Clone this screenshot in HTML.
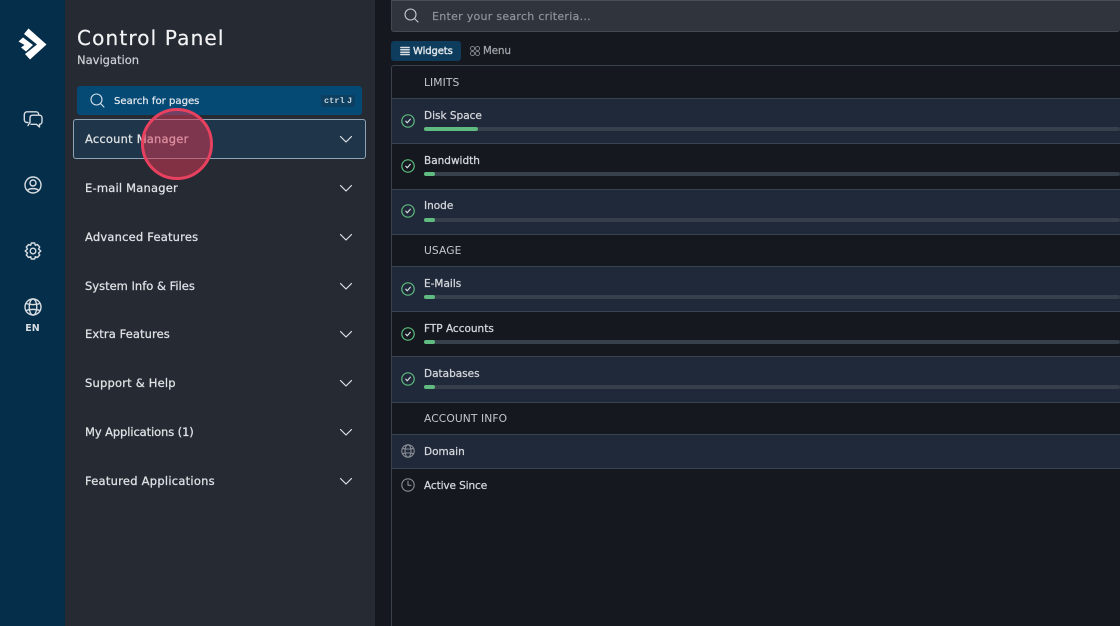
<!DOCTYPE html>
<html><head><meta charset="utf-8"><style>
html,body{margin:0;padding:0;background:#15191f}
#p{position:relative;width:1120px;height:626px;overflow:hidden;background:#15191f;font-family:"DejaVu Sans","Liberation Sans",sans-serif;color:#d5d8dc}
#p div,#p svg{position:absolute}
.t{white-space:nowrap;line-height:14px}
.nav{left:85px;font-size:11.5px;font-weight:400;color:#dfe2e5;letter-spacing:.2px;-webkit-text-stroke:.25px #dfe2e5}
.w{left:424px;font-size:10.5px;color:#d5d8dc;-webkit-text-stroke:.25px #d5d8dc}
.sec{left:424px;font-size:10.7px;color:#c3c7cc;letter-spacing:.1px}
.row{left:392px;width:728px;border-bottom:1px solid #384250}
.hl{background:#20293a}
.bar{left:424px;width:696px;height:4px;background:#363f4b;border-radius:2px}
.fill{left:0;top:0;height:4px;border-radius:2px;background:#5fbb7f}
svg{fill:none;stroke:currentColor;stroke-linecap:round;stroke-linejoin:round}
</style></head><body><div id="p">
<div style="left:0;top:0;width:65px;height:626px;background:#052e4a"></div>
<div style="left:65px;top:0;width:310px;height:626px;background:#262a33"></div>

<svg style="left:12px;top:22px" width="40" height="44" viewBox="12 22 40 44"><path stroke="none" fill="#fff" d="M28.500 28.500L46.500 44.500L30 59.500L25 54L37 44.500L24 34Z"/><path stroke="none" fill="#fff" d="M23 37.500L33 45L26 51.500L21 47.500L24.500 45L18.500 41.500Z"/></svg>

<svg style="left:23px;top:110px;color:#d8dde2" width="20" height="19" viewBox="0 0 20 19" stroke-width="1.400"><path d="M5 12.500H4C2.500 12.500 1.300 11.300 1.300 9.800V4.500C1.300 3 2.500 1.800 4 1.800H13C14.500 1.800 15.700 3 15.700 4.500V5"/><path d="M5 15.500L7 12.500V8C7 6.300 8 5.200 9.700 5.200H16.500C18 5.200 19 6.300 19 8V11.500C19 13.200 18 14.300 16.500 14.300V17L13.500 14.300H8" fill="#052e4a"/></svg>
<svg style="left:24px;top:176px;color:#d8dde2" width="18" height="18" viewBox="0 0 18 18" stroke-width="1.400"><circle cx="9" cy="9" r="8"/><circle cx="9" cy="7" r="3"/><path d="M3.500 14.500C5 12 13 12 14.500 14.500"/></svg>
<svg style="left:24px;top:242px;color:#d8dde2" width="18" height="18" viewBox="0 0 18 18" stroke-width="1.400"><path d="M7.300 1H10.700L11.300 3.300L13.400 2.500L15.700 5L14.500 7L16.800 9L14.500 11L15.700 13L13.400 15.500L11.300 14.700L10.700 17H7.300L6.700 14.700L4.600 15.500L2.300 13L3.500 11L1.200 9L3.500 7L2.300 5L4.600 2.500L6.700 3.300Z"/><circle cx="9" cy="9" r="2.800"/></svg>
<svg style="left:24px;top:298px;color:#d8dde2" width="18" height="18" viewBox="0 0 18 18" stroke-width="1.400"><circle cx="9" cy="9" r="8"/><ellipse cx="9" cy="9" rx="3.800" ry="8"/><path d="M2 5.500C6 7 12 7 16 5.500M2 12.500C6 11 12 11 16 12.500"/></svg>
<div class="t" style="left:0;width:65px;text-align:center;top:322px;font-size:9.500px;font-weight:700;color:#d8dde2">EN</div>

<div class="t" style="left:77px;top:26px;font-size:20px;line-height:24px;color:#f2f3f4;letter-spacing:1.150px;-webkit-text-stroke:.2px #f2f3f4">Control Panel</div>
<div class="t" style="left:77px;top:53px;font-size:11.500px;color:#cdd0d4;-webkit-text-stroke:.2px #cdd0d4">Navigation</div>

<div style="left:77px;top:86px;width:285px;height:29px;background:#054a75;border-radius:3px"></div>
<svg style="left:90px;top:93px;color:#d8e2ea" width="15" height="15" viewBox="0 0 15 15" stroke-width="1.100"><circle cx="6.500" cy="6.500" r="5.500"/><path d="M10.500 10.500L14 14"/></svg>
<div class="t" style="left:114px;top:94px;font-size:10.100px;line-height:15px;color:#dfe6ec;-webkit-text-stroke:.25px #dfe6ec">Search for pages</div>
<div style="left:321px;top:95px;width:34px;height:12px;background:#0d3f60;border-radius:2px"></div>
<div class="t" style="left:324px;top:94px;font-family:'Liberation Mono',monospace;font-size:8.600px;font-weight:700;color:#c9d3da">ctrl</div>
<div class="t" style="left:347px;top:94px;font-family:'Liberation Mono',monospace;font-size:8.600px;font-weight:700;color:#c9d3da">J</div>

<div style="left:73px;top:119px;width:291px;height:38px;background:#1f3549;border:1px solid #8ea3b5;border-radius:3px"></div>
<div class="t nav" style="top:132px">Account Manager</div>
<div class="t nav" style="top:181px">E-mail Manager</div>
<div class="t nav" style="top:230px">Advanced Features</div>
<div class="t nav" style="top:279px;letter-spacing:0">System Info &amp; Files</div>
<div class="t nav" style="top:327px;letter-spacing:.1px">Extra Features</div>
<div class="t nav" style="top:376px">Support &amp; Help</div>
<div class="t nav" style="top:425px;letter-spacing:-.1px">My Applications (1)</div>
<div class="t nav" style="top:474px;letter-spacing:.25px">Featured Applications</div>

<svg style="left:339px;top:135px;color:#dfe2e5" width="14" height="9" viewBox="0 0 14 9" stroke-width="1.200"><path d="M1.500 1.500L7 7L12.500 1.500"/></svg>
<svg style="left:339px;top:184px;color:#dfe2e5" width="14" height="9" viewBox="0 0 14 9" stroke-width="1.200"><path d="M1.500 1.500L7 7L12.500 1.500"/></svg>
<svg style="left:339px;top:233px;color:#dfe2e5" width="14" height="9" viewBox="0 0 14 9" stroke-width="1.200"><path d="M1.500 1.500L7 7L12.500 1.500"/></svg>
<svg style="left:339px;top:282px;color:#dfe2e5" width="14" height="9" viewBox="0 0 14 9" stroke-width="1.200"><path d="M1.500 1.500L7 7L12.500 1.500"/></svg>
<svg style="left:339px;top:330px;color:#dfe2e5" width="14" height="9" viewBox="0 0 14 9" stroke-width="1.200"><path d="M1.500 1.500L7 7L12.500 1.500"/></svg>
<svg style="left:339px;top:379px;color:#dfe2e5" width="14" height="9" viewBox="0 0 14 9" stroke-width="1.200"><path d="M1.500 1.500L7 7L12.500 1.500"/></svg>
<svg style="left:339px;top:428px;color:#dfe2e5" width="14" height="9" viewBox="0 0 14 9" stroke-width="1.200"><path d="M1.500 1.500L7 7L12.500 1.500"/></svg>
<svg style="left:339px;top:477px;color:#dfe2e5" width="14" height="9" viewBox="0 0 14 9" stroke-width="1.200"><path d="M1.500 1.500L7 7L12.500 1.500"/></svg>

<div style="left:141px;top:108px;width:66px;height:66px;border:3px solid #e8405f;border-radius:50%;background:rgba(222,55,85,.5)"></div>

<div style="left:391px;top:0;width:729px;height:32px;background:#30343c;border:1px solid #444850;border-top-color:#494d55;border-right:0;box-sizing:border-box;border-radius:0 0 3px 3px"></div>
<svg style="left:404px;top:8px;color:#c7cacd" width="15" height="15" viewBox="0 0 15 15" stroke-width="1.100"><circle cx="6.500" cy="6.500" r="5.500"/><path d="M10.500 10.500L14 14"/></svg>
<div class="t" style="left:432px;top:10px;font-size:11px;color:#92969c;letter-spacing:.28px;-webkit-text-stroke:.15px #92969c">Enter your search criteria...</div>

<div style="left:391px;top:41px;width:70px;height:20px;background:#0d3c5c;border-radius:3px"></div>
<svg style="left:400px;top:46px;color:#d8dde2" width="10" height="10" viewBox="0 0 10 10" stroke-width="1.500"><path d="M.8 1.500H9.200M.8 3.800H9.200M.8 6.200H9.200M.8 8.500H9.200"/></svg>
<div class="t" style="left:413px;top:45px;font-size:10px;color:#dfe4e8;-webkit-text-stroke:.4px #dfe4e8;letter-spacing:-.1px">Widgets</div>
<svg style="left:470px;top:46px;color:#9a9ea3" width="10" height="10" viewBox="0 0 10 10" stroke-width=".8"><circle cx="2.500" cy="2.500" r="2"/><circle cx="7.500" cy="2.500" r="2"/><circle cx="2.500" cy="7.500" r="2"/><circle cx="7.500" cy="7.500" r="2"/></svg>
<div class="t" style="left:483px;top:45px;font-size:10.200px;color:#a3a7ab;-webkit-text-stroke:.25px #a3a7ab">Menu</div>

<div style="left:391px;top:65px;width:729px;height:561px;border:1px solid #3a424c;border-right:0;border-bottom:0;box-sizing:border-box;border-radius:3px 0 0 0"></div>

<div class="t sec" style="top:76px">LIMITS</div>
<div class="row" style="top:98px;height:0"></div>
<div class="row hl" style="top:99px;height:44px"></div>
<div class="row" style="top:144px;height:45px"></div>
<div class="row hl" style="top:190px;height:44px"></div>
<div class="t sec" style="top:244px">USAGE</div>
<div class="row" style="top:266px;height:0"></div>
<div class="row hl" style="top:267px;height:44px"></div>
<div class="row" style="top:312px;height:44px"></div>
<div class="row hl" style="top:357px;height:45px"></div>
<div class="t sec" style="top:412px">ACCOUNT INFO</div>
<div class="row" style="top:434px;height:0"></div>
<div class="row hl" style="top:435px;height:33px"></div>

<div class="t w" style="top:109px">Disk Space</div>
<div class="t w" style="top:154px">Bandwidth</div>
<div class="t w" style="top:199px">Inode</div>
<div class="t w" style="top:277px">E-Mails</div>
<div class="t w" style="top:322px">FTP Accounts</div>
<div class="t w" style="top:367px">Databases</div>
<div class="t w" style="top:445px">Domain</div>
<div class="t w" style="top:479px;letter-spacing:-.1px">Active Since</div>

<div class="bar" style="top:127px"><div class="fill" style="width:54px"></div></div>
<div class="bar" style="top:172px"><div class="fill" style="width:11px"></div></div>
<div class="bar" style="top:218px"><div class="fill" style="width:11px"></div></div>
<div class="bar" style="top:295px"><div class="fill" style="width:11px"></div></div>
<div class="bar" style="top:340px"><div class="fill" style="width:11px"></div></div>
<div class="bar" style="top:385px"><div class="fill" style="width:11px"></div></div>

<svg style="left:401px;top:114px;color:#5fbb7f" width="14" height="14" viewBox="0 0 14 14" stroke-width="1.200"><circle cx="7" cy="7" r="6.200"/><path d="M4.800 7.200L6.300 8.800L9.300 5.200" stroke="#d5d8dc"/></svg>
<svg style="left:401px;top:159px;color:#5fbb7f" width="14" height="14" viewBox="0 0 14 14" stroke-width="1.200"><circle cx="7" cy="7" r="6.200"/><path d="M4.800 7.200L6.300 8.800L9.300 5.200" stroke="#d5d8dc"/></svg>
<svg style="left:401px;top:204px;color:#5fbb7f" width="14" height="14" viewBox="0 0 14 14" stroke-width="1.200"><circle cx="7" cy="7" r="6.200"/><path d="M4.800 7.200L6.300 8.800L9.300 5.200" stroke="#d5d8dc"/></svg>
<svg style="left:401px;top:282px;color:#5fbb7f" width="14" height="14" viewBox="0 0 14 14" stroke-width="1.200"><circle cx="7" cy="7" r="6.200"/><path d="M4.800 7.200L6.300 8.800L9.300 5.200" stroke="#d5d8dc"/></svg>
<svg style="left:401px;top:327px;color:#5fbb7f" width="14" height="14" viewBox="0 0 14 14" stroke-width="1.200"><circle cx="7" cy="7" r="6.200"/><path d="M4.800 7.200L6.300 8.800L9.300 5.200" stroke="#d5d8dc"/></svg>
<svg style="left:401px;top:372px;color:#5fbb7f" width="14" height="14" viewBox="0 0 14 14" stroke-width="1.200"><circle cx="7" cy="7" r="6.200"/><path d="M4.800 7.200L6.300 8.800L9.300 5.200" stroke="#d5d8dc"/></svg>

<svg style="left:401px;top:444px;color:#8a8e94" width="14" height="14" viewBox="0 0 14 14" stroke-width="1.100"><circle cx="7" cy="7" r="6.200"/><ellipse cx="7" cy="7" rx="3" ry="6.200"/><path d="M1.500 4.300C4.500 5.400 9.500 5.400 12.500 4.300M1.500 9.700C4.500 8.600 9.500 8.600 12.500 9.700"/></svg>
<svg style="left:401px;top:478px;color:#8a8e94" width="14" height="14" viewBox="0 0 14 14" stroke-width="1.100"><circle cx="7" cy="7" r="6.200"/><path d="M7 3.200V7.300H10"/></svg>
</div></body></html>
